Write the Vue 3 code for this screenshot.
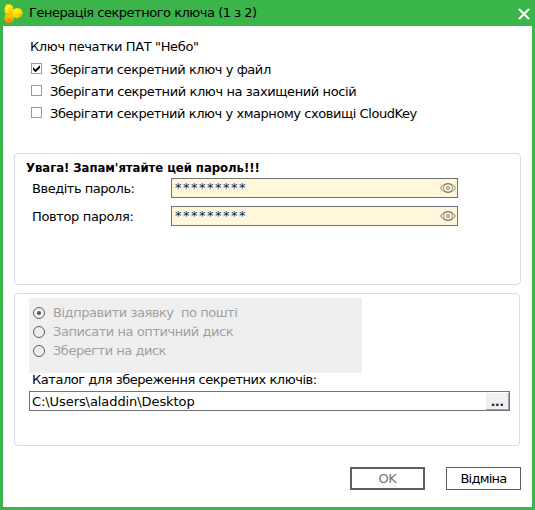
<script setup>
import { ref } from 'vue'

const targets = ref([
  { label: 'Зберігати секретний ключ у файл', checked: true, cls: 'c1' },
  { label: 'Зберігати секретний ключ на захищений носій', checked: false, cls: 'c2' },
  { label: 'Зберігати секретний ключ у хмарному сховищі CloudKey', checked: false, cls: 'c3' },
])
const passwords = [
  { label: 'Введіть пароль:', value: '*********', cls: 'p1' },
  { label: 'Повтор пароля:', value: '*********', cls: 'p2' },
]
const actions = [
  { label: 'Відправити заявку  по пошті', on: true, cls: 'r1' },
  { label: 'Записати на оптичний диск', on: false, cls: 'r2' },
  { label: 'Зберегти на диск', on: false, cls: 'r3' },
]
</script>

<template>
  <div class="window">
    <header class="titlebar">
      <svg class="logo" width="20" height="20" viewBox="0 0 20 20">
        <defs>
          <linearGradient id="gold" x1="0" y1="0" x2="0.7" y2="1">
            <stop offset="0" stop-color="#ffd820" />
            <stop offset="0.4" stop-color="#fff010" />
            <stop offset="1" stop-color="#f8b800" />
          </linearGradient>
          <linearGradient id="amber" x1="0" y1="0" x2="0" y2="1">
            <stop offset="0" stop-color="#ffe000" />
            <stop offset="1" stop-color="#ee8500" />
          </linearGradient>
        </defs>
        <path d="M2.5 10.5 6 9 10.5 11 11 16 8 19 3.5 19.2 1 15z" fill="url(#amber)" />
        <path d="M3 0.4 6.5 0 9.8 2 10.5 6 10 10 5 11 2 9 1.5 5z" fill="url(#gold)" />
        <path d="M9.5 5.8 13.5 4 17.5 4.8 20 9 17.8 12.7 13.5 14.5 9.8 12.8 8 9.5z" fill="url(#gold)" />
        <path d="M10.3 7 9.2 9.8 10.5 12.4M2.5 10.6 6 10.8 9 9.8" stroke="#e8a000" stroke-width="0.7" fill="none" />
      </svg>
      <h1><span class="t-title">Генерація секретного ключа (1 з 2)</span></h1>
      <svg class="close" width="12" height="12" viewBox="0 0 12 12">
        <path d="M1 1 11 11M11 1 1 11" stroke="#fff" stroke-width="2.1" fill="none" />
      </svg>
    </header>
    <main>
      <section class="storage">
        <p class="heading"><span class="t-head">Ключ печатки ПАТ "Небо"</span></p>
        <label v-for="t in targets" :key="t.label" class="check">
          <svg width="11" height="11" viewBox="0 0 11 11">
            <rect x="0.5" y="0.5" width="10" height="10" fill="#fff" stroke="#9a9a9a" />
            <path v-if="t.checked" d="M2 4.2 4.5 6.6 9 2.2V5L4.5 9.2 2 6.8z" fill="#000" />
          </svg>
          <span :class="t.cls">{{ t.label }}</span>
        </label>
      </section>

      <section class="group secret">
        <p class="warn"><span class="t-warn">Увага! Запам'ятайте цей пароль!!!</span></p>
        <div v-for="p in passwords" :key="p.label" class="pass-row">
          <div class="pass-label"><span :class="p.cls">{{ p.label }}</span></div>
          <div class="pass-field">
            <span class="stars">{{ p.value }}</span>
            <svg width="16" height="10" viewBox="0 0 16 10" fill="none" stroke="#817d72" stroke-width="1">
              <path d="M0.5 5C3 1.8 5 0.6 8 0.6S13 1.8 15.5 5C13 8.2 11 9.4 8 9.4S3 8.2 0.5 5z" />
              <ellipse cx="8" cy="5" rx="4.5" ry="4.2" stroke-width="0.9" />
              <ellipse cx="8" cy="5" rx="1.6" ry="1.3" />
            </svg>
          </div>
        </div>
      </section>

      <section class="group output">
        <div class="radios">
          <label v-for="a in actions" :key="a.label" class="radio">
            <svg width="12" height="12" viewBox="0 0 12 12">
              <circle cx="6" cy="6" r="5.5" fill="none" stroke="#5c5c5c" />
              <circle v-if="a.on" cx="6" cy="6" r="2.1" fill="#5c5c5c" />
            </svg>
            <span :class="a.cls">{{ a.label }}</span>
          </label>
        </div>
        <p class="dir-label"><span class="t-dir">Каталог для збереження секретних ключів:</span></p>
        <div class="dir-field">
          <span class="t-path">C:\Users\aladdin\Desktop</span>
          <button class="browse">...</button>
        </div>
      </section>

      <footer>
        <button class="btn ok"><span class="t-ok">OK</span></button>
        <button class="btn cancel"><span class="t-cancel">Відміна</span></button>
      </footer>
    </main>
  </div>
</template>

<style>
body { margin: 0; overflow: hidden; }
</style>

<style scoped>
* { box-sizing: border-box; margin: 0; padding: 0; }
.window {
  width: 535px;
  height: 510px;
  background: #3ab54a;
  padding: 0 3px 3px;
  display: flex;
  flex-direction: column;
  font-family: Verdana, "DejaVu Sans", sans-serif;
  font-size: 13px;
  color: #000;
}
span { white-space: pre; }
.t-title { letter-spacing: -0.48px; }
.t-head { letter-spacing: -0.36px; }
.c1 { letter-spacing: -0.43px; }
.c2 { letter-spacing: -0.4px; }
.c3 { letter-spacing: -0.44px; }
.t-warn { font-family: "DejaVu Sans Condensed", "DejaVu Sans", sans-serif; font-stretch: semi-condensed; letter-spacing: -0.05px; }
.p1 { letter-spacing: -0.47px; }
.p2 { letter-spacing: -0.36px; }
.r1 { letter-spacing: -0.46px; }
.r2 { letter-spacing: -0.44px; }
.r3 { letter-spacing: -0.48px; }
.t-dir { letter-spacing: -0.46px; }
.t-path { letter-spacing: -0.08px; }
.t-ok { letter-spacing: -0.3px; }
.t-cancel { letter-spacing: -0.75px; }
.titlebar { height: 26px; display: flex; align-items: flex-start; flex: none; padding-top: 4px; }
.logo { flex: none; width: 20px; }
h1 { font-size: 13px; font-weight: 400; line-height: 18px; margin-left: 6px; flex: 1; }
.close { margin: 4px 2px 0 0; flex: none; }
main { flex: 1; background: #fff; display: flex; flex-direction: column; min-height: 0; }
.storage { height: 127px; padding: 12px 0 0 28px; flex: none; }
.heading { line-height: 18px; height: 21px; margin-left: -1px; }
.check { display: flex; align-items: flex-start; height: 22px; line-height: 22px; }
.check svg { flex: none; margin: 4px 8px 0 0; }
.group { border: 1px solid #d3dce4; border-radius: 4px; flex: none; }
.secret { margin-left: 11px; width: 507px; height: 132px; padding-left: 11px; }
.warn { font-weight: 700; height: 24px; line-height: 27px; }
.pass-row { display: flex; height: 28px; }
.pass-label { width: 145px; padding-left: 6px; line-height: 21px; }
.pass-field {
  width: 287px;
  height: 20px;
  border: 1px solid #727272;
  background: #fff6dc;
  display: flex;
  justify-content: space-between;
  padding: 4px 1px 0 3px;
  color: #0b2a4a;
}
.stars { line-height: 16px; letter-spacing: 1.5px; margin-top: -3px; }
.output { margin: 8px 0 0 11px; width: 506px; height: 153px; padding: 4px 0 0 14px; }
.radios { width: 333px; height: 75px; background: #efefef; padding: 5px 0 0 4px; color: #a0a0a0; }
.radio { display: flex; align-items: center; height: 19px; }
.radio svg { flex: none; margin-right: 8px; }
.dir-label { height: 18px; line-height: 14px; padding-left: 3px; }
.dir-field {
  width: 481px;
  height: 20px;
  border: 1px solid #727272;
  display: flex;
  justify-content: space-between;
  padding: 1px 0 0 2px;
  line-height: 18px;
}
.browse {
  width: 23px;
  height: 17px;
  background: #eff0f1;
  border: solid #a0a0a0;
  border-width: 0 1px 1px 0;
  font: bold 13px/18px Verdana, "DejaVu Sans", sans-serif;
  letter-spacing: -0.6px;
  color: #14304e;
}
footer { display: flex; justify-content: flex-end; gap: 21px; padding: 21px 11px 0 0; }
.btn { width: 75px; height: 23px; background: #fff; font: 13px/18px Verdana, "DejaVu Sans", sans-serif; }
.ok { border: 2px solid #5f5f5f; color: #737373; }
.cancel { border: 1px solid #5f5f5f; color: #000; }
</style>
